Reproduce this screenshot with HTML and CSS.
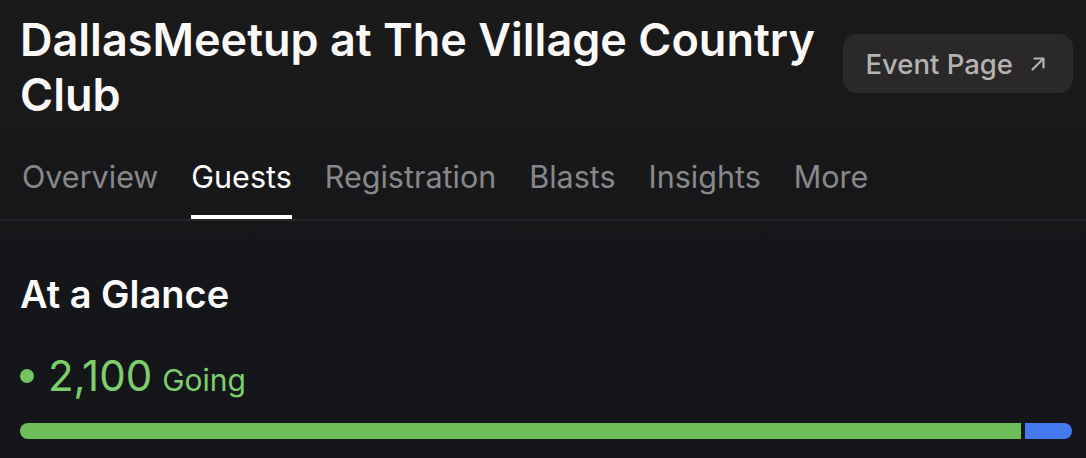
FILE: index.html
```html
<!DOCTYPE html>
<html lang="en">
<head>
  <meta charset="UTF-8" />
  <meta name="viewport" content="width=device-width, initial-scale=1.0" />
  <title>DallasMeetup at The Village Country Club</title>
  <link rel="stylesheet" href="styles.css">
</head>
<body>
  <div class="header">
    <h1 class="title">DallasMeetup at The Village Country Club</h1>
    <a class="event-btn" href="#">
      Event Page
      <svg class="arrow" viewBox="0 0 16 16" width="16" height="16">
        <path d="M2.5 13.5 L13 3 M4.5 2.5 H13.5 V11.5" fill="none" stroke="currentColor" stroke-width="2.2" stroke-linecap="round" stroke-linejoin="round"/>
      </svg>
    </a>
  </div>

  <div class="tabs">
    <a class="tab" href="#">Overview</a>
    <a class="tab active" href="#">Guests</a>
    <a class="tab" href="#">Registration</a>
    <a class="tab" href="#">Blasts</a>
    <a class="tab" href="#">Insights</a>
    <a class="tab" href="#">More</a>
  </div>

  <div class="content">
    <h2>At a Glance</h2>
    <div class="going">
      <span class="dot"></span>
      <span class="count">2,100</span>
      <span class="label">Going</span>
    </div>
    <div class="bar">
      <div class="bar-going"></div>
      <div class="bar-other"></div>
    </div>
  </div>
</body>
</html>
```

FILE: styles.css
```css
* {
  box-sizing: border-box;
}
body {
  font-family: Inter, "Noto Sans", sans-serif;
  margin: 0;
  padding: 0;
  background: linear-gradient(#1b1a1a 0, #19191a 120px, #151619 260px) no-repeat;
  background-color: #151619;
  min-height: 458px;
  color: #fff;
  overflow: hidden;
}
.header {
  display: flex;
  align-items: flex-start;
  justify-content: space-between;
  gap: 24px;
  padding: 12px 13px 0 20px;
}
.title {
  margin: 0;
  font-size: 45px;
  font-weight: 600;
  line-height: 55px;
  color: #fbf9f8;
  flex: 1;
}
.event-btn {
  display: flex;
  align-items: center;
  gap: 17px;
  flex-shrink: 0;
  margin-top: 22px;
  height: 59px;
  padding: 0 27px 0 22px;
  border-radius: 14px;
  background: #2a2828;
  color: #b5b3b2;
  font-size: 27.5px;
  font-weight: 500;
  text-decoration: none;
}
.arrow {
  width: 16px;
  height: 16px;
}
.tabs {
  display: flex;
  gap: 33px;
  padding: 0 20px 0 22px;
  border-bottom: 2px solid #26272a;
}
.tab {
  padding: 36px 0 20px;
  font-size: 30.5px;
  line-height: 37px;
  color: #88888b;
  text-decoration: none;
  border-bottom: 4px solid transparent;
}
.tab.active {
  color: #fff;
  border-bottom-color: #fff;
}
.content {
  padding: 51px 14px 0 20px;
}
h2 {
  margin: 0;
  font-size: 38px;
  font-weight: 600;
  line-height: 44px;
  color: #fdfcfc;
}
.going {
  display: flex;
  align-items: baseline;
  gap: 10px;
  margin-top: 35px;
  color: #7dcf6c;
}
.dot {
  width: 14px;
  height: 14px;
  border-radius: 50%;
  background: #74c463;
  align-self: center;
  margin-right: 4px;
}
.count {
  font-size: 42px;
  line-height: 50px;
}
.label {
  font-size: 30px;
}
.bar {
  display: flex;
  gap: 4px;
  margin-top: 22px;
  height: 16px;
}
.bar-going {
  flex: 1;
  background: #6ebf5b;
  border-radius: 8px 0 0 8px;
}
.bar-other {
  width: 47px;
  background: #4479f0;
  border-radius: 0 8px 8px 0;
}
```
